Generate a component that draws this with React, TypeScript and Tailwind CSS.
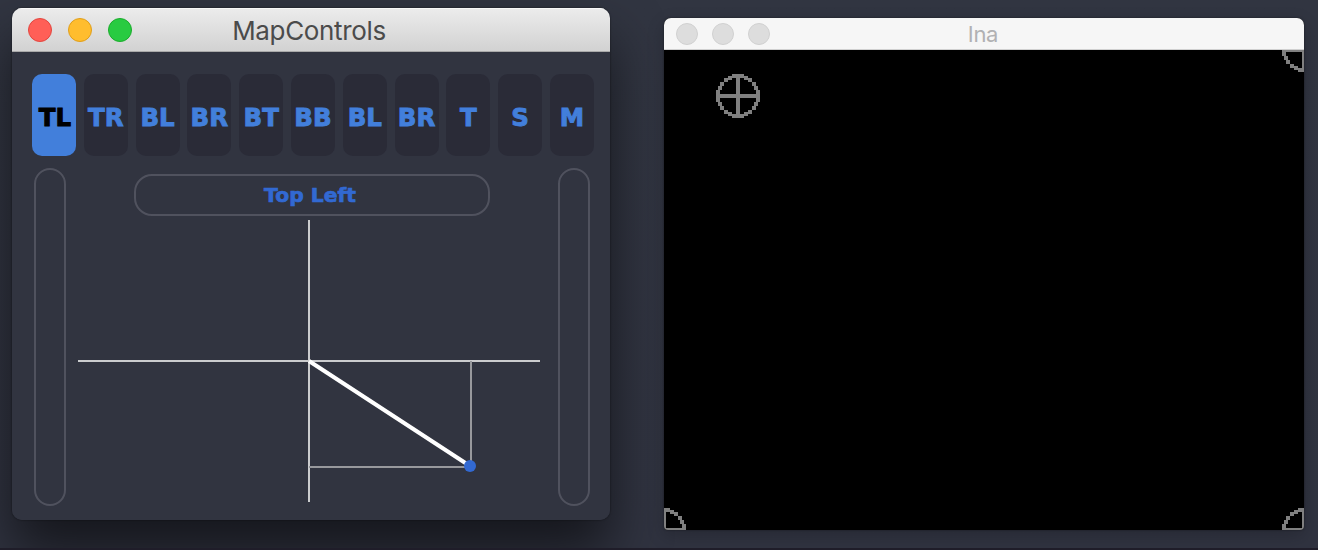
const tabs = ["TL", "TR", "BL", "BR", "BT", "BB", "BL", "BR", "T", "S", "M"];

const lights = [
  "bg-[#ff5f57] border-[#e2463f]",
  "bg-[#ffbd2e] border-[#df9e1b]",
  "bg-[#28cb41] border-[#1bac2c]",
];

// Upper-left quadrant of the ring, as 2x2 blocks on a 22x22 grid: [x, y].
const arc: [number, number][] = [[8, 0], [6, 1], [4, 2], [2, 4], [1, 6], [0, 8]];

function Target({ className }: { className: string }) {
  return (
    <svg width="44" height="44" viewBox="0 0 22 22" shapeRendering="crispEdges" fill="#808080" className={`absolute ${className}`}>
      {arc.map(([x, y]) => (
        <g key={x}>
          <rect x={x} y={y} width="2" height="2" />
          <rect x={20 - x} y={y} width="2" height="2" />
          <rect x={x} y={20 - y} width="2" height="2" />
          <rect x={20 - x} y={20 - y} width="2" height="2" />
        </g>
      ))}
      <path d="M8 0h6v2H8zM8 20h6v2H8zM0 8h2v6H0zM20 8h2v6h-2zM10 0h2v22h-2zM0 10h22v2H0z" />
    </svg>
  );
}

function MapControls() {
  return (
    <section className="flex h-[512px] w-[598px] flex-col overflow-hidden rounded-[10px] bg-[#313440]">
      <header className="flex h-11 shrink-0 items-center border-b border-[#a9a9a9] bg-linear-to-b from-[#ececec] to-[#d2d2d2] px-4 shadow-[inset_0_1px_0_#f7f7f7]">
        <div className="flex w-[104px] gap-4">
          {lights.map((c) => <span key={c} className={`size-6 rounded-full border ${c}`} />)}
        </div>
        <h1 className="flex-1 pt-0.5 pr-[108px] text-center font-['Inter',sans-serif] text-[26px] leading-[42px] tracking-[-0.35px] text-[#4b4b4b]">MapControls</h1>
      </header>
      <nav className="mt-[22px] ml-5 flex w-[562px] justify-between">
        {tabs.map((t, i) => (
          <button
            key={i}
            className={`flex h-[82px] w-11 items-center justify-center rounded-[10px] pt-[7px] font-['DejaVu_Sans',sans-serif] text-[24.5px] font-bold [-webkit-text-stroke:0.9px_currentColor] ${i === 0 ? "bg-[#427fdb] pl-[2px] text-black" : "bg-[#2a2b37] text-[#427fdb]"}`}
          >
            {t}
          </button>
        ))}
      </nav>
      <div className="mt-3 ml-[22px] flex w-[556px] justify-between">
        <div className="h-[338px] w-8 rounded-full border-2 border-[#50525e]" />
        <div className="flex flex-col items-center pt-1.5">
          <div className="flex h-[42px] w-[356px] items-center justify-center rounded-[18px] border-2 border-[#50525e] pr-1 font-['DejaVu_Sans',sans-serif] text-[20.3px] font-bold text-[#3269d2] [-webkit-text-stroke:0.7px_currentColor]">
            Top Left
          </div>
          <svg width="470" height="286" viewBox="77 216 470 286" fill="none" className="block">
            <path d="M309 220V502M78 361H540" stroke="#cbccce" strokeWidth="2" />
            <path d="M471 361V467H309" stroke="#98999d" strokeWidth="2" />
            <path d="M309 361L470 466" stroke="#fff" strokeWidth="4" />
            <circle cx="470" cy="466" r="6" fill="#3269d2" />
          </svg>
        </div>
        <div className="h-[338px] w-8 rounded-full border-2 border-[#50525e]" />
      </div>
    </section>
  );
}

function Preview() {
  return (
    <section className="mt-[18px] mr-3.5 flex h-[512px] w-[640px] flex-col overflow-hidden rounded-t-[7px] rounded-b-[4px] bg-black shadow-[0_6px_18px_rgba(0,0,0,0.2),0_0_2px_rgba(0,0,0,0.5)]">
      <header className="flex h-8 shrink-0 items-center border-b border-[#d0d0d0] bg-[#f6f6f6] px-3">
        <div className="flex w-[94px] gap-3.5">
          {[0, 1, 2].map((i) => <span key={i} className="size-[22px] rounded-full border border-[#d0d0d0] bg-[#dddddd]" />)}
        </div>
        <h2 className="flex-1 pt-px pr-[96px] text-center font-['Inter',sans-serif] text-[22px] leading-[30px] tracking-[-0.3px] text-[#b1b1b3]">Ina</h2>
      </header>
      <div className="relative flex-1 overflow-hidden">
        <Target className="top-6 left-[52px]" />
        <Target className="-top-[22px] -right-[22px]" />
        <Target className="-bottom-[22px] -left-[22px]" />
        <Target className="-right-[22px] -bottom-[22px]" />
      </div>
    </section>
  );
}

export default function App() {
  return (
    <main className="flex h-[550px] w-[1318px] items-start justify-between overflow-hidden border-b-2 border-[#1f1d29] bg-linear-to-b from-[#313541] to-[#303340]">
      <div className="mt-2 ml-3 rounded-[10px] shadow-[0_32px_54px_rgba(0,0,0,0.56),0_0_2px_rgba(0,0,0,0.6)]">
        <MapControls />
      </div>
      <Preview />
    </main>
  );
}
